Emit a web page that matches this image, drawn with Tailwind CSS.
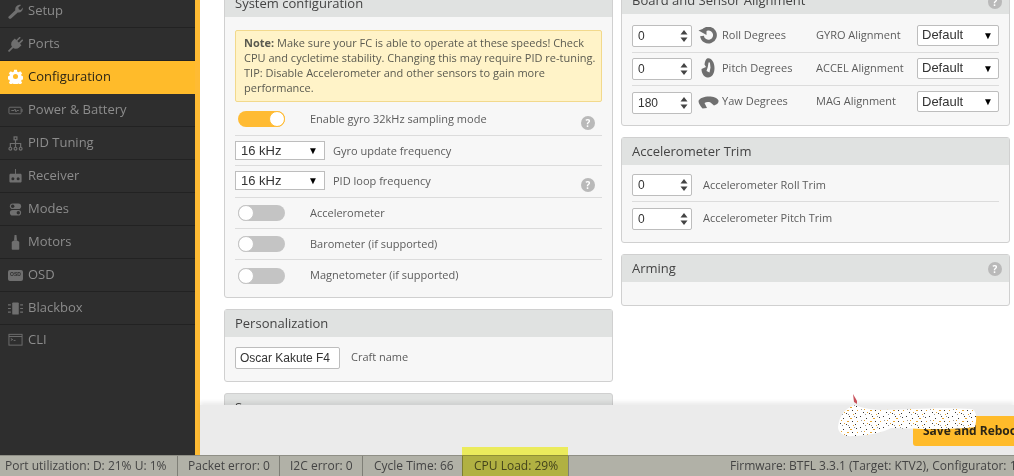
<!DOCTYPE html>
<html lang="en">
  <head>
    <meta charset="UTF-8" />
    <title>Betaflight Configurator</title>
    <script src="https://cdn.jsdelivr.net/npm/@tailwindcss/browser@4"></script>
  </head>
  <body class="bg-white">
    <div class="relative flex flex-col w-[1014px] h-[476px] overflow-hidden font-['Open_Sans',sans-serif] text-[11px] text-[#5c5c5c]">
      <div class="flex h-[455px] overflow-hidden">
        <!-- Sidebar -->
        <nav class="w-[200px] shrink-0 h-full bg-[#2e2e2e] border-r-[5px] border-[#ffbb33] text-[13px] text-[#8c8c8c]">
          <div class="flex items-center gap-[5px] h-[28px] pl-[8px] pb-[5px] border-b border-[#222]">
            <svg class="w-[15px] h-[15px]" viewBox="0 0 16 16" fill="#6f6f6f"><path d="M.5 13.500 7.800 6.600C7.200 3.500 10 .3 14 1L11 3.800l.6 2 2 .6 2.200-2.600c.5 3.600-2.600 6-5.400 5.200L3 15.600c-1.500.8-3.300-.9-2.500-2.100z"/></svg>
            <span>Setup</span>
          </div>
          <div class="flex items-center gap-[5px] h-[33px] pl-[8px] border-b border-[#222]">
            <svg class="w-[15px] h-[15px]" viewBox="0 0 16 16" fill="#6f6f6f"><g transform="rotate(45 8 8)"><path d="M5.200-1h1.700v5H5.200zM9.100-1h1.700v5H9.100zM3 4h10v3.500a5 5 0 0 1-10 0z"/><path d="M7.100 12h1.800v6.500H7.100z"/></g></svg>
            <span>Ports</span>
          </div>
          <div class="flex items-center gap-[5px] h-[33px] pl-[8px] pb-[2px] bg-[#ffbb2a] text-[#2b2516]">
            <svg class="w-[15px] h-[15px]" viewBox="0 0 16 16"><path fill="#fff" fill-rule="evenodd" d="M6.500.8h3l.4 2 1.400.6 1.800-1.100 2 2.100-1.100 1.700.6 1.400 2 .5v3l-2 .4-.6 1.400 1.100 1.800-2 2-1.800-1.100-1.400.6-.4 1.900h-3l-.4-2-1.400-.5-1.800 1.100-2-2 1.100-1.800-.6-1.400-2-.4v-3l2-.5.6-1.400-1.100-1.700 2-2.100 1.800 1.100 1.400-.6zM8 5.300a2.700 2.700 0 1 0 0 5.400 2.700 2.700 0 0 0 0-5.400z"/></svg>
            <span>Configuration</span>
          </div>
          <div class="flex items-center gap-[5px] h-[33px] pl-[8px] border-b border-[#222]">
            <svg class="w-[15px] h-[15px]" viewBox="0 0 16 16" fill="none" stroke="#6f6f6f"><rect x="1" y="4.500" width="13" height="7" rx="1"/><path d="M15 6.500v3M3.500 8h3l1-1.500 1 3 1-1.500h2"/></svg>
            <span>Power &amp; Battery</span>
          </div>
          <div class="flex items-center gap-[5px] h-[33px] pl-[8px] border-b border-[#222]">
            <svg class="w-[15px] h-[15px]" viewBox="0 0 16 16" fill="none" stroke="#6f6f6f" stroke-width="1.300"><rect x="6.500" y="1" width="3" height="3"/><path d="M8 4v4M2.500 12V8h11v4M8 8v4"/><circle cx="2.500" cy="13.500" r="1.500"/><circle cx="8" cy="13.500" r="1.500"/><circle cx="13.500" cy="13.500" r="1.500"/></svg>
            <span>PID Tuning</span>
          </div>
          <div class="flex items-center gap-[5px] h-[33px] pl-[8px] border-b border-[#222]">
            <svg class="w-[15px] h-[15px]" viewBox="0 0 16 16"><path fill="#6f6f6f" d="M7.500 0h1v5H13c1 0 1.500.6 1.500 1.500V13c0 1-.6 1.500-1.500 1.500H3c-1 0-1.500-.6-1.500-1.500V6.500C1.500 5.600 2 5 3 5h4.500z"/><circle cx="5.200" cy="10.500" r="1.600" fill="#2e2e2e"/><circle cx="10.800" cy="10.500" r="1.600" fill="#2e2e2e"/></svg>
            <span>Receiver</span>
          </div>
          <div class="flex items-center gap-[5px] h-[33px] pl-[8px] border-b border-[#222]">
            <svg class="w-[15px] h-[15px]" viewBox="0 0 16 16"><rect x="2" y="1.500" width="12" height="6" rx="3" fill="#6f6f6f"/><circle cx="5" cy="4.500" r="1.800" fill="#2e2e2e"/><rect x="2" y="8.500" width="12" height="6" rx="3" fill="#6f6f6f"/><circle cx="11" cy="11.500" r="1.800" fill="#2e2e2e"/></svg>
            <span>Modes</span>
          </div>
          <div class="flex items-center gap-[5px] h-[33px] pl-[8px] border-b border-[#222]">
            <svg class="w-[15px] h-[15px]" viewBox="0 0 16 16" fill="#6f6f6f"><path d="M7 0h2l.6 6H6.400z"/><path d="M5.500 6h5l1.500 1.500V15c0 .500-.3.800-.8.800H4.800c-.5 0-.8-.3-.8-.8V7.500z"/></svg>
            <span>Motors</span>
          </div>
          <div class="flex items-center gap-[5px] h-[33px] pl-[8px] border-b border-[#222]">
            <span class="flex items-center justify-center w-[15px] h-[11px] rounded-[2px] bg-[#6f6f6f] font-['Liberation_Sans',sans-serif] text-[5px] font-bold text-[#2e2e2e]">OSD</span>
            <span>OSD</span>
          </div>
          <div class="flex items-center gap-[5px] h-[33px] pl-[8px] border-b border-[#222]">
            <svg class="w-[15px] h-[15px]" viewBox="0 0 16 16" fill="#6f6f6f"><rect x="4.500" y="1.500" width="7" height="13" rx="1"/><path d="M0 3.500h3v1.200H0zM0 7.400h3v1.200H0zM0 11.300h3v1.200H0zM13 3.500h3v1.200h-3zM13 7.400h3v1.200h-3zM13 11.300h3v1.200h-3z"/></svg>
            <span>Blackbox</span>
          </div>
          <div class="flex items-center gap-[5px] h-[29px] pl-[8px]">
            <svg class="w-[15px] h-[15px]" viewBox="0 0 16 16" fill="none" stroke="#6f6f6f"><rect x="1" y="2.500" width="14" height="11.500"/><path d="M1 4.800h14M3 7l2 1-2 1M6 9h2"/></svg>
            <span>CLI</span>
          </div>
        </nav>

        <!-- Content -->
        <main class="relative flex-1 flex gap-[8px] pl-[24px] pr-[4px]">
          <!-- Left column -->
          <div class="w-[389px] shrink-0 flex flex-col gap-[11px] mt-[-11px]">
            <section class="h-[309px] shrink-0 rounded-[3px] border border-[#d0d0d0] bg-[#f7f7f7]">
              <h3 class="flex items-center h-[27px] px-[10px] bg-[#e0e2e1] text-[13px] text-[#444]">System configuration</h3>
              <div class="px-[10px]">
                <div class="mt-[13px] h-[72px] pl-[8px] pr-[2px] pt-[4px] rounded-[2px] border border-[#f2d98c] bg-[#fff3c8] leading-[15px] text-[#5a5a50]">
                  <strong class="font-bold">Note:</strong> Make sure your FC is able to operate at these speeds! Check CPU and cycletime stability. Changing this may require PID re-tuning. TIP: Disable Accelerometer and other sensors to gain more performance.
                </div>
                <div class="relative flex items-center h-[34px] border-b border-[#dcdcdc]">
                  <span class="relative ml-[3px] w-[47px] h-[16px] rounded-full bg-[#ffbb33]">
                    <span class="absolute right-0 top-0 w-[16px] h-[16px] rounded-full bg-white border border-[#ffbb33]"></span>
                  </span>
                  <span class="ml-[25px] mt-[2px]">Enable gyro 32kHz sampling mode</span>
                  <span class="absolute right-[7px] top-[14px] flex items-center justify-center w-[14px] h-[14px] rounded-full bg-[#b9b9b9] text-[10px] font-bold text-white">?</span>
                </div>
                <div class="flex items-center h-[30px] border-b border-[#dcdcdc]">
                  <div class="flex items-center justify-between w-[90px] h-[19px] pl-[5px] pr-[6px] border border-[#bdbdbd] bg-white font-['Liberation_Sans',sans-serif] text-[13px] text-[#333]"><span>16 kHz</span><span class="text-[10px] text-black">▼</span></div>
                  <span class="ml-[8px] mt-[1px]">Gyro update frequency</span>
                </div>
                <div class="relative flex items-center h-[32px] border-b border-[#dcdcdc]">
                  <div class="flex items-center justify-between w-[90px] h-[19px] mb-[2px] pl-[5px] pr-[6px] border border-[#bdbdbd] bg-white font-['Liberation_Sans',sans-serif] text-[13px] text-[#333]"><span>16 kHz</span><span class="text-[10px] text-black">▼</span></div>
                  <span class="ml-[8px]">PID loop frequency</span>
                  <span class="absolute right-[7px] top-[12px] flex items-center justify-center w-[14px] h-[14px] rounded-full bg-[#b9b9b9] text-[10px] font-bold text-white">?</span>
                </div>
                <div class="flex items-center h-[31px] border-b border-[#dcdcdc]">
                  <span class="relative ml-[3px] w-[47px] h-[16px] rounded-full bg-[#c4c4c4]">
                    <span class="absolute left-0 top-0 w-[16px] h-[16px] rounded-full bg-white border border-[#c4c4c4]"></span>
                  </span>
                  <span class="ml-[25px]">Accelerometer</span>
                </div>
                <div class="flex items-center h-[31px] border-b border-[#dcdcdc]">
                  <span class="relative ml-[3px] w-[47px] h-[16px] rounded-full bg-[#c4c4c4]">
                    <span class="absolute left-0 top-0 w-[16px] h-[16px] rounded-full bg-white border border-[#c4c4c4]"></span>
                  </span>
                  <span class="ml-[25px]">Barometer (if supported)</span>
                </div>
                <div class="flex items-center h-[31px]">
                  <span class="relative ml-[3px] w-[47px] h-[16px] rounded-full bg-[#c4c4c4]">
                    <span class="absolute left-0 top-0 w-[16px] h-[16px] rounded-full bg-white border border-[#c4c4c4]"></span>
                  </span>
                  <span class="ml-[25px]">Magnetometer (if supported)</span>
                </div>
              </div>
            </section>
            <section class="h-[73px] shrink-0 rounded-[3px] border border-[#d0d0d0] bg-[#f7f7f7]">
              <h3 class="flex items-center h-[27px] px-[10px] bg-[#e0e2e1] text-[13px] text-[#444]">Personalization</h3>
              <div class="flex items-center px-[10px] pt-[10px]">
                <div class="flex items-center w-[105px] h-[22px] pl-[4px] rounded-[2px] border border-[#bdbdbd] bg-white font-['Liberation_Sans',sans-serif] text-[12px] text-[#333]">Oscar Kakute F4</div>
                <span class="ml-[11px] mb-[2px]">Craft name</span>
              </div>
            </section>
            <section class="h-[40px] shrink-0 rounded-[3px] border border-[#d0d0d0] bg-[#e0e2e1] px-[10px] pt-[4px] text-[13px] text-[#444]">Sensors</section>
          </div>

          <!-- Right column -->
          <div class="w-[389px] shrink-0 flex flex-col gap-[11px] mt-[-14px]">
            <section class="h-[140px] shrink-0 rounded-[3px] border border-[#d0d0d0] bg-[#f7f7f7]">
              <h3 class="relative flex items-center h-[27px] px-[10px] bg-[#e0e2e1] text-[13px] text-[#444]">
                Board and Sensor Alignment
                <span class="absolute right-[7px] top-[8px] flex items-center justify-center w-[14px] h-[14px] rounded-full bg-[#b9b9b9] text-[10px] font-bold text-white">?</span>
              </h3>
              <div class="mx-[10px] mt-[6px]">
                <div class="flex items-center h-[33px] border-b border-[#dcdcdc]">
                  <div class="flex items-center justify-between w-[60px] h-[22px] pl-[5px] pr-[3px] rounded-[2px] border border-[#bdbdbd] bg-white font-['Liberation_Sans',sans-serif] text-[12px] text-[#333]">0
                    <svg class="w-[8px] h-[14px]" viewBox="0 0 8 14" fill="#444"><path d="M4 1l3.500 4.500h-7zM4 13 .5 8.500h7z"/></svg>
                  </div>
                  <svg class="ml-[6px] w-[20px] h-[18px]" viewBox="0 0 20 18" fill="none"><path d="M6 3.400A6.500 6.500 0 1 1 4 9" stroke="#6f6f6f" stroke-width="3.800"/><path d="M.5 3.500 8.500 .5v7.500z" fill="#6f6f6f"/></svg>
                  <span class="ml-[4px] w-[94px] mb-[2px]">Roll Degrees</span>
                  <span class="w-[101px] mb-[2px]">GYRO Alignment</span>
                  <div class="flex items-center justify-between w-[82px] h-[21px] mb-[2px] pl-[4px] pr-[5px] rounded-[2px] border border-[#bdbdbd] bg-white font-['Liberation_Sans',sans-serif] text-[13px] text-[#333]"><span>Default</span><span class="text-[10px] text-black">▼</span></div>
                </div>
                <div class="flex items-center h-[33px] border-b border-[#dcdcdc]">
                  <div class="flex items-center justify-between w-[60px] h-[22px] pl-[5px] pr-[3px] rounded-[2px] border border-[#bdbdbd] bg-white font-['Liberation_Sans',sans-serif] text-[12px] text-[#333]">0
                    <svg class="w-[8px] h-[14px]" viewBox="0 0 8 14" fill="#444"><path d="M4 1l3.500 4.500h-7zM4 13 .5 8.500h7z"/></svg>
                  </div>
                  <svg class="ml-[9px] w-[14px] h-[20px] mb-[2px]" viewBox="0 0 14 20"><path fill="#6f6f6f" fill-rule="evenodd" d="M6 .5c4-1.500 7.500 3.500 7.500 9.500s-3 10-7 9.500C2.500 19 .5 15 .5 11L5 9 3.500 6.500C3.800 4 4.500 1.500 6 .5zM7.500 4.500 6.800 9 5.500 13l3 1.500 1-5-.6-5z"/></svg>
                  <span class="ml-[7px] w-[94px] mb-[2px]">Pitch Degrees</span>
                  <span class="w-[101px] mb-[2px]">ACCEL Alignment</span>
                  <div class="flex items-center justify-between w-[82px] h-[21px] mb-[2px] pl-[4px] pr-[5px] rounded-[2px] border border-[#bdbdbd] bg-white font-['Liberation_Sans',sans-serif] text-[13px] text-[#333]"><span>Default</span><span class="text-[10px] text-black">▼</span></div>
                </div>
                <div class="flex items-center h-[33px]">
                  <div class="flex items-center justify-between w-[60px] h-[22px] pl-[5px] pr-[3px] rounded-[2px] border border-[#bdbdbd] bg-white font-['Liberation_Sans',sans-serif] text-[12px] text-[#333]">180
                    <svg class="w-[8px] h-[14px]" viewBox="0 0 8 14" fill="#444"><path d="M4 1l3.500 4.500h-7zM4 13 .5 8.500h7z"/></svg>
                  </div>
                  <svg class="ml-[6px] w-[21px] h-[15px]" viewBox="0 0 21 15"><path d="M.5 6C2 .5 18 -.5 20.500 5.500 21 8 18.500 9.500 16 10.500L12.500 7.500c-2-.8-4.500-.6-6 .5l2.500 5-4.500.5C2.500 11 .5 8.500.5 6z" fill="#6f6f6f"/></svg>
                  <span class="ml-[3px] w-[94px] mb-[2px]">Yaw Degrees</span>
                  <span class="w-[101px] mb-[2px]">MAG Alignment</span>
                  <div class="flex items-center justify-between w-[82px] h-[21px] mb-[2px] pl-[4px] pr-[5px] rounded-[2px] border border-[#bdbdbd] bg-white font-['Liberation_Sans',sans-serif] text-[13px] text-[#333]"><span>Default</span><span class="text-[10px] text-black">▼</span></div>
                </div>
              </div>
            </section>
            <section class="h-[106px] shrink-0 rounded-[3px] border border-[#d0d0d0] bg-[#f7f7f7]">
              <h3 class="flex items-center h-[27px] px-[10px] bg-[#e0e2e1] text-[13px] text-[#444]">Accelerometer Trim</h3>
              <div class="mx-[10px] mt-[4px]">
                <div class="flex items-center h-[33px] border-b border-[#dcdcdc]">
                  <div class="flex items-center justify-between w-[60px] h-[22px] pl-[5px] pr-[3px] rounded-[2px] border border-[#bdbdbd] bg-white font-['Liberation_Sans',sans-serif] text-[12px] text-[#333]">0
                    <svg class="w-[8px] h-[14px]" viewBox="0 0 8 14" fill="#444"><path d="M4 1l3.500 4.500h-7zM4 13 .5 8.500h7z"/></svg>
                  </div>
                  <span class="ml-[11px]">Accelerometer Roll Trim</span>
                </div>
                <div class="flex items-center h-[33px]">
                  <div class="flex items-center justify-between w-[60px] h-[22px] pl-[5px] pr-[3px] rounded-[2px] border border-[#bdbdbd] bg-white font-['Liberation_Sans',sans-serif] text-[12px] text-[#333]">0
                    <svg class="w-[8px] h-[14px]" viewBox="0 0 8 14" fill="#444"><path d="M4 1l3.500 4.500h-7zM4 13 .5 8.500h7z"/></svg>
                  </div>
                  <span class="ml-[11px]">Accelerometer Pitch Trim</span>
                </div>
              </div>
            </section>
            <section class="h-[52px] shrink-0 rounded-[3px] border border-[#d0d0d0] bg-[#f7f7f7]">
              <h3 class="relative flex items-center h-[27px] px-[10px] bg-[#e0e2e1] text-[13px] text-[#444]">
                Arming
                <span class="absolute right-[7px] top-[7px] flex items-center justify-center w-[14px] h-[14px] rounded-full bg-[#b9b9b9] text-[10px] font-bold text-white">?</span>
              </h3>
            </section>
          </div>

          <!-- Toolbar floats over the scrolled content -->
          <div class="absolute left-0 right-0 bottom-0 h-[50px] bg-[#ebebeb] shadow-[0_-3px_4px_rgba(0,0,0,0.08)]">
            <div class="absolute left-[713px] top-[11px] flex items-center w-[130px] h-[30px] pl-[10px] rounded-[3px] bg-[#ffbb2a] text-[12px] font-bold text-[#2b2516] whitespace-nowrap">Save and Reboot</div>
            <!-- Scribble over the button -->
            <svg class="absolute left-[636px] top-[-12px]" width="142" height="46" viewBox="0 0 142 46">
              <defs>
                <pattern id="noise" width="23" height="11" patternUnits="userSpaceOnUse">
                  <rect width="23" height="11" fill="#fff"/>
                  <path d="M1 1h1v1H1zM7 3h1v1H7zM13 1h1v1h-1zM4 8h1v1H4zM10 9h1v1h-1zM16 6h1v1h-1zM20 2h1v1h-1zM19 9h1v1h-1z" fill="#333"/>
                  <path d="M5 5h1v1H5zM11 6h2v1h-2zM17 10h1v1h-1zM14 3h2v1h-2zM8 8h1v1H8zM21 6h1v1h-1z" fill="#e8a530"/>
                  <path d="M2 5h1v1H2zM12 10h1v1h-1zM18 1h1v1h-1zM6 10h1v1H6z" fill="#999"/>
                </pattern>
              </defs>
              <path d="M17 1l4 7 0 3-3-2z" fill="#c8505a"/>
              <path d="M2 34C3 24 8 16 18 12c8 3 20 5 30 5 25-1 60-3 88-1 5 2 5 10 3 18-20 3-60 2-84 1-4 3-22 8-38 8C8 44 2 40 2 34z" fill="url(#noise)"/>
            </svg>
          </div>
        </main>
      </div>

      <!-- Status bar -->
      <footer class="relative flex items-center h-[21px] bg-[#b1b1a7] border-t border-[#8f8f86] text-[12px] text-[#444] whitespace-nowrap">
        <div class="w-[178px] shrink-0 pl-[5px] border-r border-[#7f7f77] leading-[20px]">Port utilization: D: 21% U: 1%</div>
        <div class="w-[102px] shrink-0 pl-[10px] border-r border-[#7f7f77] leading-[20px]">Packet error: 0</div>
        <div class="w-[83px] shrink-0 pl-[10px] border-r border-[#7f7f77] leading-[20px]">I2C error: 0</div>
        <div class="w-[100px] shrink-0 pl-[11px] border-r border-[#7f7f77] leading-[20px]">Cycle Time: 66</div>
        <div class="w-[106px] shrink-0 pl-[11px] border-r border-[#7f7f77] leading-[20px]">CPU Load: 29%</div>
        <div class="ml-[161px] shrink-0 leading-[20px]">Firmware: BTFL 3.3.1 (Target: KTV2), Configurator: 10.0.0</div>
      </footer>

      <!-- Highlighter mark -->
      <div class="absolute left-[462px] top-[447px] w-[106px] h-[29px] bg-[#ffff64] mix-blend-multiply"></div>
    </div>
  </body>
</html>
